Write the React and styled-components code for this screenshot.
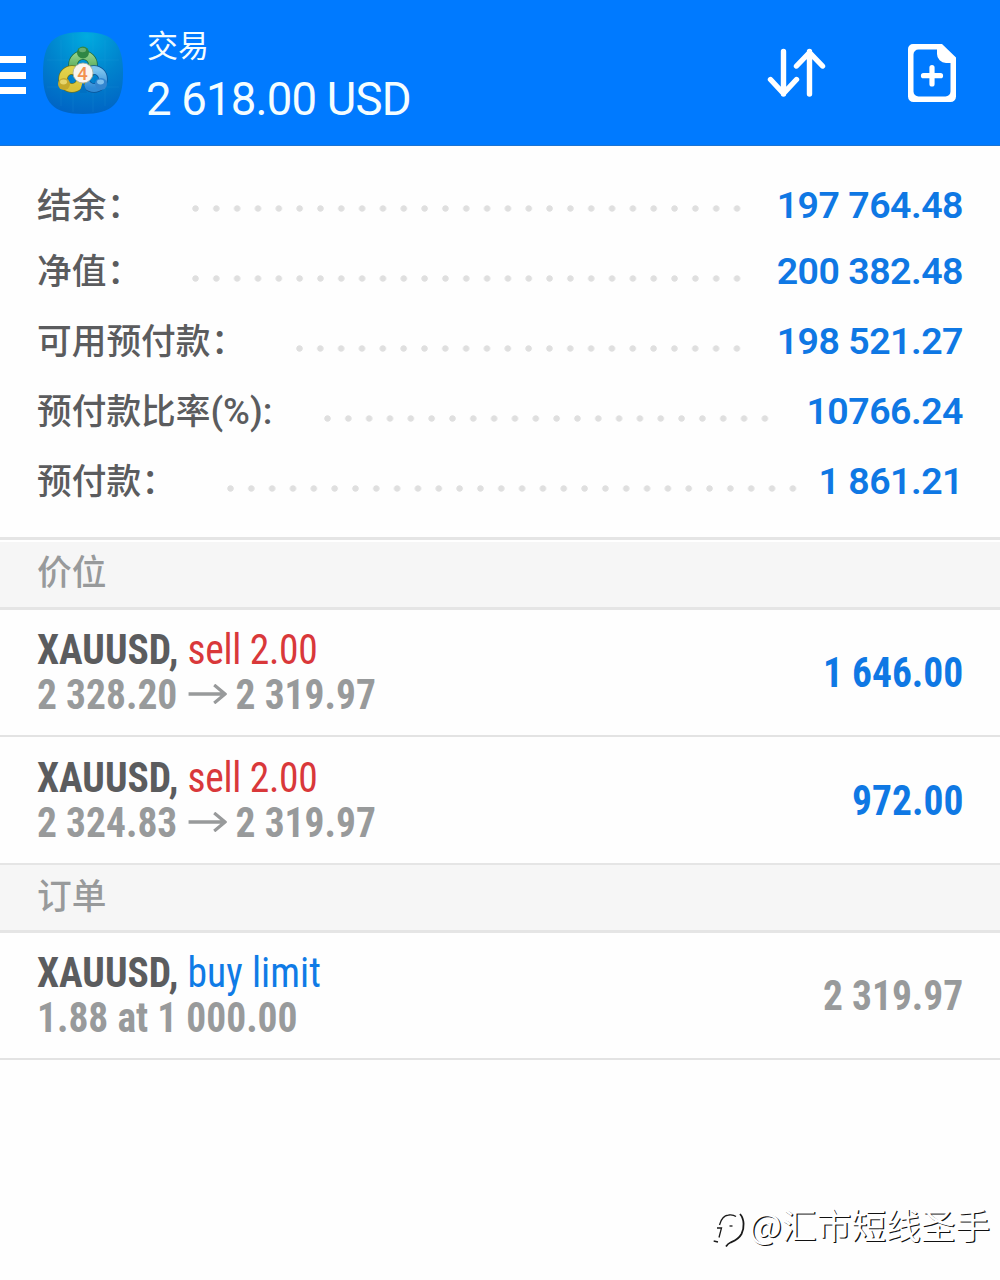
import React from "react";
import styled, { createGlobalStyle } from "styled-components";

const summary = [
  { label: "结余", value: "197 764.48", start: 192, dots: 27 },
  { label: "净值", value: "200 382.48", start: 192, dots: 27 },
  { label: "可用预付款", value: "198 521.27", start: 296, dots: 22 },
  { label: "预付款比率", unit: "(%):", value: "10766.24", start: 324, dots: 22 },
  { label: "预付款", value: "1 861.21", start: 227, dots: 28 },
];

const positions = [
  { symbol: "XAUUSD,", type: "sell 2.00", open: "2 328.20", current: "2 319.97", profit: "1 646.00" },
  { symbol: "XAUUSD,", type: "sell 2.00", open: "2 324.83", current: "2 319.97", profit: "972.00" },
];

export default function App() {
  return (
    <>
      <GlobalStyle />
      <Screen>
        <Header>
          <MenuButton aria-label="menu">
            <span />
            <span />
            <span />
          </MenuButton>
          <AppLogo />
          <Title>
            <h1>交易</h1>
            <p>2 618.00 USD</p>
          </Title>
          <Actions>
            <SortIcon />
            <NewOrderIcon />
          </Actions>
        </Header>
        <Summary>
          {summary.map((item) => (
            <SummaryRow key={item.label}>
              <Label>
                {item.label}
                {item.unit ? <Unit>{item.unit}</Unit> : <Colon>：</Colon>}
              </Label>
              <Leader $start={item.start} $dots={item.dots} />
              <Value>{item.value}</Value>
            </SummaryRow>
          ))}
        </Summary>
        <SectionTitle>价位</SectionTitle>
        {positions.map((item, index) => (
          <TradeRow key={item.open} $last={index === positions.length - 1}>
            <TradeInfo>
              <TradeName $color="#d9383a">
                {item.symbol} <span>{item.type}</span>
              </TradeName>
              <TradePrice>
                {item.open}
                <Arrow />
                {item.current}
              </TradePrice>
            </TradeInfo>
            <Profit>{item.profit}</Profit>
          </TradeRow>
        ))}
        <SectionTitle $compact>订单</SectionTitle>
        <TradeRow>
          <TradeInfo>
            <TradeName $color="#0f7be6" $spacing="0.1px">
              XAUUSD, <span>buy limit</span>
            </TradeName>
            <TradePrice>1.88 at 1 000.00</TradePrice>
          </TradeInfo>
          <Profit $muted>2 319.97</Profit>
        </TradeRow>
        <Watermark>
          <WatermarkLogo />
          @汇市短线圣手
        </Watermark>
      </Screen>
    </>
  );
}

function AppLogo() {
  return (
    <LogoBox viewBox="0 0 80 82">
      <defs>
        <radialGradient id="tile" cx="0.55" cy="0.05" r="1">
          <stop offset="0" stopColor="#00abe0" />
          <stop offset="0.5" stopColor="#0083cd" />
          <stop offset="1" stopColor="#0062c4" />
        </radialGradient>
        <linearGradient id="green" x1="0" y1="0" x2="0" y2="1">
          <stop offset="0" stopColor="#8fcf86" />
          <stop offset="1" stopColor="#3f9a48" />
        </linearGradient>
        <linearGradient id="yellow" x1="0" y1="0" x2="0" y2="1">
          <stop offset="0" stopColor="#e2d24a" />
          <stop offset="1" stopColor="#d9c23a" />
        </linearGradient>
        <linearGradient id="blue" x1="0" y1="0" x2="0" y2="1">
          <stop offset="0" stopColor="#7cc4ee" />
          <stop offset="1" stopColor="#2f8ad6" />
        </linearGradient>
      </defs>
      <path d="M40 0C70 0 80 11 80 41S70 82 40 82 0 71 0 41 10 0 40 0Z" fill="url(#tile)" />
      <path d="M18 8V74M62 8V74M4 28H76M4 55H76M30 2V80M50 2V80" stroke="#35b4e8" strokeWidth="0.6" opacity="0.2" />
      <g fill="none">
        <circle cx="40" cy="33" r="10" stroke="#1d6a3c" strokeWidth="9.500" />
        <circle cx="40" cy="33" r="10" stroke="url(#green)" strokeWidth="8" />
        <circle cx="51" cy="47" r="9" stroke="#0b5295" strokeWidth="9.500" />
        <circle cx="51" cy="47" r="9" stroke="url(#blue)" strokeWidth="8" />
        <circle cx="29" cy="47" r="9" stroke="#6d741f" strokeWidth="9.500" />
        <circle cx="29" cy="47" r="9" stroke="url(#yellow)" strokeWidth="8" />
      </g>
      <path d="M40 49L36.500 61H44Z" fill="#0070c2" />
      <circle cx="40" cy="20.500" r="6" fill="#2f8744" />
      <ellipse cx="39.500" cy="18" rx="3.500" ry="2.200" fill="#68ae70" />
      <circle cx="21" cy="52" r="6" fill="#c4a92c" />
      <ellipse cx="20.500" cy="50" rx="3.500" ry="2.400" fill="#e6d56c" />
      <circle cx="58" cy="52" r="6" fill="#3486d0" />
      <ellipse cx="57.500" cy="50" rx="3.500" ry="2.400" fill="#7fc0ee" />
      <circle cx="40" cy="41" r="10" fill="#faf5f0" stroke="#a9b09c" strokeWidth="0.800" />
      <text x="39.500" y="47.500" textAnchor="middle" fontFamily="Roboto, sans-serif" fontSize="18.500" fontWeight="500" fill="#f2914f">
        4
      </text>
    </LogoBox>
  );
}

function SortIcon() {
  return (
    <svg width="60" height="52" viewBox="0 0 60 52" fill="none" stroke="#fff" strokeWidth="5.4" strokeLinecap="round" strokeLinejoin="round">
      <path d="M16.500 4.500V47M3.500 32.500L16.500 46.500L29.500 32.500" />
      <path d="M42.500 47V4.500M29.500 19L42.500 5.500L55.500 19" />
    </svg>
  );
}

function NewOrderIcon() {
  return (
    <svg width="48" height="58" viewBox="0 0 48 58">
      <path
        fill="#fff"
        fillRule="evenodd"
        d="M5 0H34L48 13.500V52.500a5.500 5.500 0 0 1-5.500 5.500H5.500A5.500 5.500 0 0 1 0 52.500V5A5 5 0 0 1 5 0ZM10.500 5.500A5 5 0 0 0 5.500 10.500V47.500A5 5 0 0 0 10.500 52.500H37.500A5 5 0 0 0 42.500 47.500V19H38A9 9 0 0 1 29 10V5.500Z"
      />
      <path d="M24 23.500V40M15.500 31.700H32.500" stroke="#fff" strokeWidth="5.200" strokeLinecap="round" />
    </svg>
  );
}

function Arrow() {
  return (
    <ArrowSvg viewBox="0 0 41 20" fill="none" stroke="#989a9b" strokeWidth="3.4">
      <path d="M0 10H39M27.500 1L39 10L27.500 19" />
    </ArrowSvg>
  );
}

function WatermarkLogo() {
  return (
    <WatermarkSvg viewBox="0 0 36 40" fill="none" stroke="#1a1a1a" strokeWidth="1.300">
      <path d="M6.500 17C8 11 11 7.500 15.500 7C18.500 6.500 21 7 23 8.500" />
      <path d="M4 20H8.500L6 29.500M0.700 33L5 34" />
      <path d="M27 6C31.500 11 31.500 20 28.500 26C25.500 31.500 21 33 17.500 34.500C15 35.500 14 37 13 38.500" strokeWidth="1.800" />
      <path d="M16.500 18H19.500" />
    </WatermarkSvg>
  );
}

const GlobalStyle = createGlobalStyle`
  * {
    box-sizing: border-box;
  }
  body, h1, h2, p {
    margin: 0;
  }
  body {
    background: #fefefe;
    font-family: Roboto, "Noto Sans CJK SC", sans-serif;
  }
`;

const Screen = styled.div`
  display: flex;
  flex-direction: column;
  width: 1000px;
  height: 1280px;
  overflow: hidden;
`;

const Header = styled.header`
  display: flex;
  align-items: flex-start;
  height: 146px;
  flex-shrink: 0;
  background-color: #007aff;
  border-bottom: 1px solid #1b74d4;
  color: #f4fdff;
`;

const MenuButton = styled.button`
  display: flex;
  flex-direction: column;
  gap: 8.5px;
  width: 26px;
  margin-top: 56px;
  padding: 0;
  border: 0;
  background: none;
  span {
    height: 7px;
    background-color: #fff;
  }
`;

const LogoBox = styled.svg`
  width: 80px;
  height: 82px;
  margin: 32px 0 0 17px;
`;

const Title = styled.div`
  margin: 24px 0 0 24px;
  h1 {
    font-family: "Noto Sans CJK SC", sans-serif;
    font-size: 31px;
    font-weight: 400;
    line-height: 40px;
  }
  p {
    margin-left: -1px;
    font-size: 45.5px;
    line-height: 72px;
    letter-spacing: -0.8px;
    white-space: nowrap;
  }
`;

const Actions = styled.div`
  display: flex;
  align-items: flex-start;
  gap: 81px;
  margin: 44px 44px 0 auto;
  svg:first-child {
    margin-top: 3px;
  }
`;

const Summary = styled.section`
  height: 391px;
  flex-shrink: 0;
  padding-top: 25px;
`;

const SummaryRow = styled.div`
  display: grid;
  grid-template-columns: 1fr auto;
  height: 70px;
  padding: 0 37px 0 38px;
  line-height: 60px;
  &:first-child {
    padding-top: 4px;
  }
  > * {
    grid-row: 1;
  }
`;

const Label = styled.span`
  grid-column: 1;
  margin: -2px 0 0 -1px;
  color: #5b5c5e;
  font-family: "Noto Sans CJK SC", sans-serif;
  font-size: 34.7px;
  font-weight: 500;
`;

const Colon = styled.span`
  margin-left: 0.5px;
`;

const Unit = styled.span`
  font-family: Roboto, sans-serif;
  font-size: 36.5px;
`;

const Leader = styled.span`
  grid-column: 1;
  align-self: end;
  width: ${({ $dots }) => $dots * 20.83}px;
  height: 7px;
  margin: 0 0 29px ${({ $start }) => $start - 38}px;
  background: radial-gradient(circle at 3.5px 3.5px, #dfdfdf 2.8px, transparent 3.6px) 0 0 / 20.83px 7px repeat-x;
`;

const Value = styled.span`
  grid-column: 2;
  color: #0f78e4;
  font-size: 37.5px;
  font-weight: 600;
  letter-spacing: -0.5px;
`;

const SectionTitle = styled.h2`
  height: ${({ $compact }) => ($compact ? 70 : 73)}px;
  flex-shrink: 0;
  padding-left: 37px;
  border-top: ${({ $compact }) => ($compact ? 2 : 3)}px solid #e5e5e5;
  border-bottom: 3px solid #e5e5e5;
  box-shadow: ${({ $compact }) => ($compact ? "none" : "inset 0 2px 0 #fff")};
  background-color: #f6f6f6;
  color: #989a9b;
  font-family: "Noto Sans CJK SC", sans-serif;
  font-size: 34.7px;
  font-weight: 500;
  line-height: ${({ $compact }) => ($compact ? 59 : 61)}px;
`;

const TradeRow = styled.article`
  display: flex;
  justify-content: space-between;
  height: ${({ $last }) => ($last ? 126 : 127)}px;
  flex-shrink: 0;
  padding: ${({ $last }) => ($last ? 18 : 17)}px 37px 0;
  border-bottom: ${({ $last }) => ($last ? 0 : 2)}px solid #e3e3e3;
  font-family: "Roboto Condensed", Roboto, sans-serif;
  font-stretch: 75%;
  font-size: 42px;
`;

const TradeInfo = styled.div`
  line-height: 45px;
  transform: scaleX(0.94);
  transform-origin: left;
`;

const TradeName = styled.p`
  color: #5b5c5e;
  font-weight: 700;
  span {
    color: ${({ $color }) => $color};
    font-weight: 400;
    letter-spacing: ${({ $spacing = "-0.3px" }) => $spacing};
  }
`;

const TradePrice = styled.p`
  color: #989a9b;
  font-weight: 700;
`;

const ArrowSvg = styled.svg`
  width: 41px;
  height: 20px;
  margin: 0 9.5px 5px 11.5px;
`;

const Profit = styled.strong`
  color: ${({ $muted }) => ($muted ? "#989a9b" : "#0f78e4")};
  line-height: 91px;
  transform: scaleX(0.94);
  transform-origin: right;
`;

const Watermark = styled.footer`
  display: flex;
  justify-content: flex-end;
  margin: auto 10px 31px 0;
  color: #fff;
  font-family: "Noto Sans CJK SC", sans-serif;
  font-size: 34.7px;
  line-height: 50px;
  text-shadow: 1.2px 1.2px 0.6px #111;
`;

const WatermarkSvg = styled.svg`
  width: 36px;
  height: 40px;
  margin-top: 9px;
`;
